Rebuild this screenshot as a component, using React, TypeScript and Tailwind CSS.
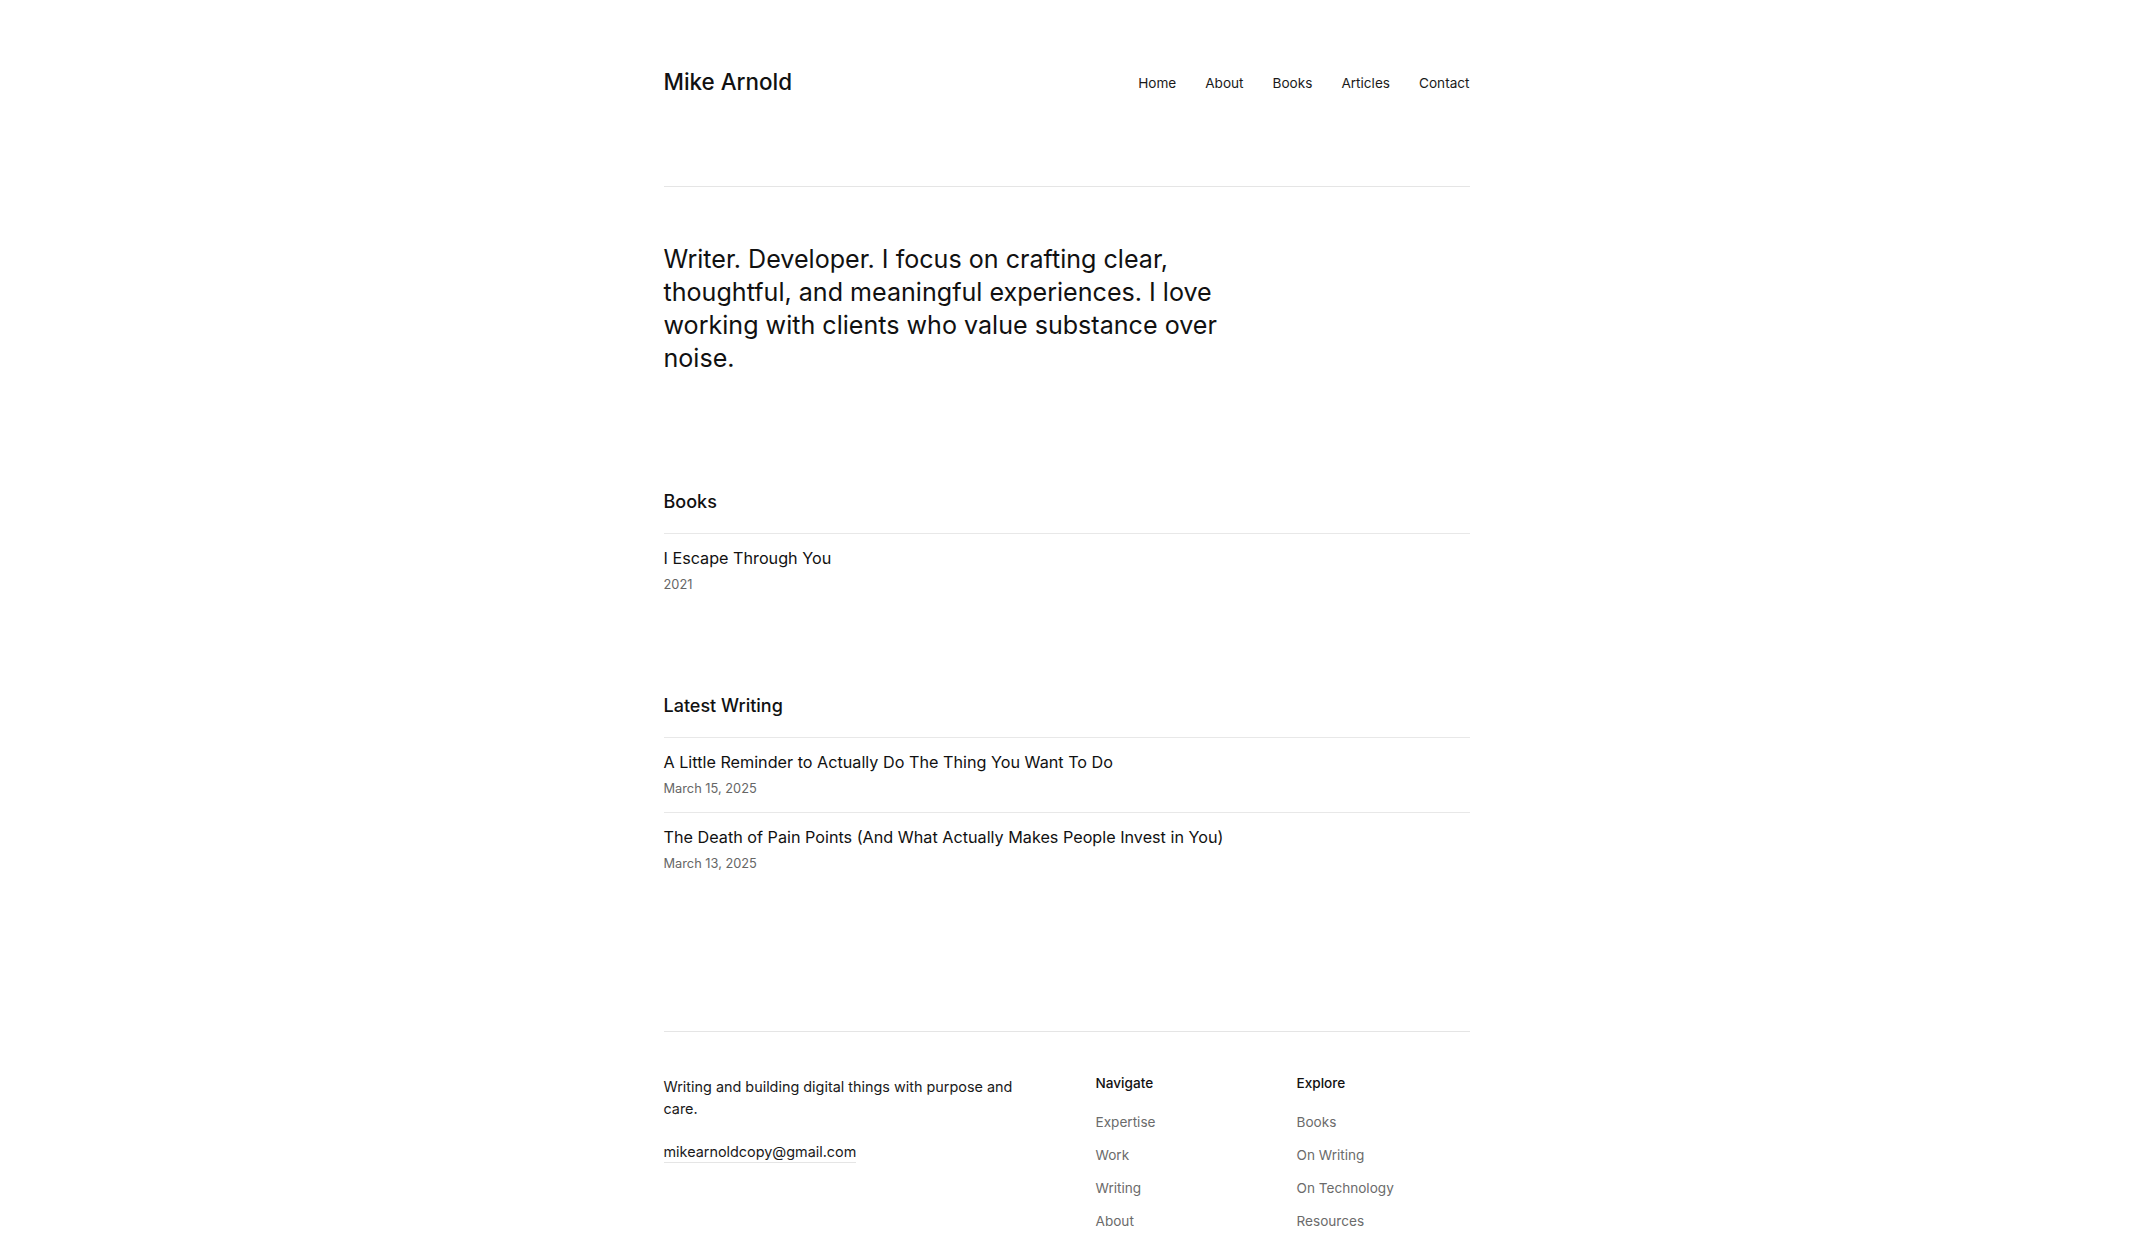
import React from "react";

const navLinks = ["Home", "About", "Books", "Articles", "Contact"];
const writing = [
  { title: "A Little Reminder to Actually Do The Thing You Want To Do", date: "March 15, 2025" },
  { title: "The Death of Pain Points (And What Actually Makes People Invest in You)", date: "March 13, 2025" },
];
const navigate = ["Expertise", "Work", "Writing", "About"];
const explore = ["Books", "On Writing", "On Technology", "Resources"];

export default function App() {
  return (
    <div className="min-h-screen bg-white text-[#111111]" style={{ fontFamily: "Inter, 'Noto Sans', sans-serif" }}>
      <div className="mx-auto w-[806px]">
        <header className="flex items-center justify-between pt-[67px] pb-[89px] border-b border-[#e5e5e5]">
          <a className="text-[22.4px] leading-[30px] font-medium text-[#111]">Mike Arnold</a>
          <nav className="flex items-center gap-[29px] pt-[2px] text-[13.6px] leading-[20px] text-[#1a1a1a]">
            {navLinks.map((l) => (
              <a key={l}>{l}</a>
            ))}
          </nav>
        </header>

        <section className="pt-[56px]">
          <p className="max-w-[600px] text-[25.1px] leading-[33px] text-[#111]">
            Writer. Developer. I focus on crafting clear, thoughtful, and meaningful experiences. I love working with clients who value substance over noise.
          </p>
        </section>

        <section className="mt-[113px]">
          <h2 className="text-[18px] leading-[28px] font-medium pb-[17px] border-b border-[#e8e8e8]">Books</h2>
          <div className="pt-[12px] pb-[14px]">
            <div className="text-[16.2px] leading-[24px] text-[#111]">I Escape Through You</div>
            <div className="mt-[5px] text-[12.8px] leading-[20px] text-[#666]">2021</div>
          </div>
        </section>

        <section className="mt-[83px]">
          <h2 className="text-[18px] leading-[28px] font-medium pb-[17px] border-b border-[#e8e8e8]">Latest Writing</h2>
          <div>
            {writing.map((w, i) => (
              <div key={i} className={"pt-[12px] pb-[13px] " + (i > 0 ? "border-t border-[#e8e8e8]" : "")}>
                <div className="text-[16.2px] leading-[24px] text-[#111]">{w.title}</div>
                <div className="mt-[5px] text-[12.8px] leading-[20px] text-[#666]">{w.date}</div>
              </div>
            ))}
          </div>
        </section>

        <footer className="mt-[144px] border-t border-[#e5e5e5] pt-[41px] pb-[40px]">
          <div className="grid grid-cols-[432px_201px_1fr]">
            <div className="pt-[3px]">
              <p className="max-w-[370px] text-[14.4px] leading-[22px] text-[#1a1a1a]">
                Writing and building digital things with purpose and care.
              </p>
              <a className="mt-[22px] inline-block text-[14.4px] leading-[20px] text-[#1a1a1a] border-b border-[#e5e5e5]">
                mikearnoldcopy@gmail.com
              </a>
            </div>
            <div>
              <h3 className="text-[13.6px] leading-[20px] font-medium text-[#111]">Navigate</h3>
              <ul className="mt-[19px] flex flex-col gap-[13px]">
                {navigate.map((l) => (
                  <li key={l} className="text-[13.6px] leading-[20px] text-[#6b6b6b]">{l}</li>
                ))}
              </ul>
            </div>
            <div>
              <h3 className="text-[13.6px] leading-[20px] font-medium text-[#111]">Explore</h3>
              <ul className="mt-[19px] flex flex-col gap-[13px]">
                {explore.map((l) => (
                  <li key={l} className="text-[13.6px] leading-[20px] text-[#6b6b6b]">{l}</li>
                ))}
              </ul>
            </div>
          </div>
        </footer>
      </div>
    </div>
  );
}
